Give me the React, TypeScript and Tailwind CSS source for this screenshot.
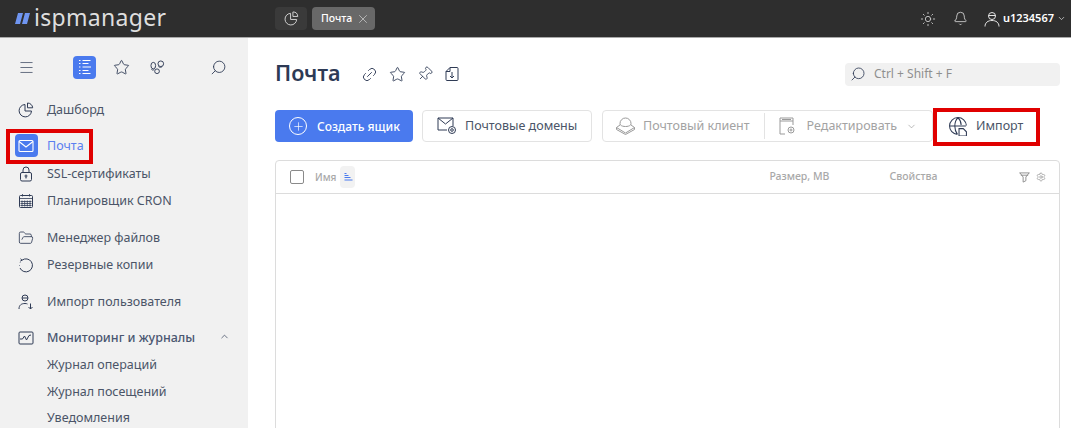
import {
  Bell,
  ChevronDown,
  ChevronUp,
  FolderOpen,
  Link2,
  Menu,
  Pin,
  Plus,
  Search,
  Settings,
  Star,
  Sun,
  X,
} from "lucide-react";
import type { ReactNode } from "react";

const PieIcon = ({ className }: { className?: string }) => (
  <svg viewBox="0 0 16 16" fill="none" stroke="currentColor" strokeWidth="1" className={className}>
    <path d="M7 2.5a6.2 6.2 0 1 0 6.5 6.5H7V2.5Z" />
    <path d="M9.5 1v4.8h5.2A5.2 5.2 0 0 0 9.5 1Z" />
  </svg>
);

const TreeIcon = () => (
  <svg viewBox="0 0 16 16" fill="none" stroke="white" strokeWidth="1" className="size-4">
    <path d="M2 1.5h1.5M2 4.5h1.5M2 8h1.5M2 11.5h1.5M2 14.5h1.5M5.5 1.5h8M5.5 4.5h6M5.5 8h8.5M5.5 11.5h6M5.5 14.5h8" />
  </svg>
);

const CoinsIcon = () => (
  <svg viewBox="0 0 16 16" fill="none" stroke="#2f3b55" strokeWidth="1" className="size-[15px]">
    <ellipse cx="3.5" cy="6" rx="2.5" ry="3.5" />
    <ellipse cx="11.5" cy="4" rx="3" ry="3" />
    <ellipse cx="7.5" cy="12" rx="2.5" ry="2.5" />
    <path d="M1.5 10c1 1 2 1 3 0M9 7c1 1 3 1 4 0" />
  </svg>
);

const LockIcon = () => (
  <svg viewBox="0 0 16 16" fill="none" stroke="#2f3b55" strokeWidth="1" className="size-4">
    <rect x="2.5" y="6.5" width="11" height="8.5" rx="1.5" />
    <path d="M5 6.5V4a3 3 0 0 1 6 0v2.5" />
    <circle cx="8" cy="10" r="1" />
    <path d="M8 11v1.5" />
  </svg>
);

const CalendarIcon = () => (
  <svg viewBox="0 0 16 16" fill="none" stroke="#2f3b55" strokeWidth="1" className="size-4">
    <rect x="1.5" y="2.5" width="13" height="12" rx="1" />
    <path d="M1.5 5.5h13M4.5 1v2.5M11.5 1v2.5M4 7.5v6M6.7 7.5v6M9.3 7.5v6M12 7.5v6M2.5 8.5h11M2.5 10.5h11M2.5 12.5h11" strokeWidth="0.8" />
  </svg>
);

const BackupIcon = () => (
  <svg viewBox="0 0 16 16" fill="none" stroke="#2f3b55" strokeWidth="1" className="size-4">
    <path d="M4 3.2A6.5 6.5 0 1 1 2 11" />
    <path d="M1.5 8.5v.5M2 6l.2-.5" />
    <path d="M2.5 1.8 4 3.2l-1.8 1" />
  </svg>
);

const SidebarItem = ({
  icon,
  label,
  active,
  strong,
  trailing,
}: {
  icon?: ReactNode;
  label: string;
  active?: boolean;
  strong?: boolean;
  trailing?: ReactNode;
}) => (
  <div className="flex h-[27px] items-center">
    <div className="flex w-[47px] shrink-0 items-center justify-center pl-[5px]">{icon}</div>
    <span
      className={
        active
          ? "pt-px text-[12.5px] text-[#5b7ff0]"
          : strong
            ? "pt-px text-[12.5px] font-medium text-[#4a5670]"
            : "pt-px text-[12.5px] text-[#4b5568]"
      }
    >
      {label}
    </span>
    {trailing}
  </div>
);

export default function App() {
  return (
    <div className="flex h-[428px] w-[1071px] flex-col overflow-hidden bg-white font-['Noto_Sans',sans-serif]">
      <header className="flex h-[38px] shrink-0 items-center border-b border-[#a9a9a9] bg-[#2e2e2e] pr-[5px] pl-[15px]">
        <div className="flex w-[260px] items-center gap-[3px]">
          <svg viewBox="0 0 16 11" className="h-[11px] w-[16px]">
            <path d="M3 0h5L5 11H0ZM10 0h5l-3 11H7Z" fill="#6f95f0" />
          </svg>
          <span className="-mt-[2px] text-[23px] leading-none tracking-[0.3px] text-[#dedede]">ispmanager</span>
        </div>
        <div className="flex h-[23px] w-[32px] items-center justify-center rounded bg-[#3a3a3a]">
          <PieIcon className="size-[15px] text-[#d8d8d8]" />
        </div>
        <div className="ml-[5px] flex h-[23px] w-[63px] items-center gap-[4px] rounded bg-[#686868] pl-[9px]">
          <span className="text-[10.5px] font-medium text-white">Почта</span>
          <X className="size-[14px] text-[#d0d0d0]" strokeWidth={1.25} />
        </div>
        <div className="ml-auto flex items-center">
          <Sun className="size-[16px] text-[#d8d8d8]" strokeWidth={1.25} />
          <Bell className="ml-[17px] size-[15px] text-[#e4e4e4]" strokeWidth={1.25} />
          <svg viewBox="0 0 16 16" fill="none" stroke="#e4e4e4" strokeWidth="1" className="ml-[16px] size-[16px]">
            <circle cx="8" cy="5" r="3.5" />
            <path d="M4.5 4.5h7M1 15.5c0-4 3-6 7-6s7 2 7 6" />
          </svg>
          <span className="ml-[3px] text-[11px] font-semibold text-white">u1234567</span>
          <ChevronDown className="ml-[3px] size-[9px] text-[#d8d8d8]" strokeWidth={2} />
        </div>
      </header>

      <div className="flex min-h-0 flex-1">
        <aside className="w-[248px] shrink-0 overflow-hidden bg-[#f1f1f1]">
          <div className="flex h-[48px] items-center pt-[10px] pl-[18px]">
            <Menu className="size-[17px] text-[#2f3b55]" strokeWidth={1} />
            <div className="ml-[38px] flex size-[23px] items-center justify-center rounded-[4px] bg-[#4a7aee]">
              <TreeIcon />
            </div>
            <Star className="ml-[17px] size-[17px] text-[#2f3b55]" strokeWidth={1.25} />
            <div className="ml-[20px]"><CoinsIcon /></div>
            <Search className="ml-[45px] size-[17px] -scale-x-100 text-[#2f3b55]" strokeWidth={1.25} />
          </div>
          <div className="mt-[10px]">
            <SidebarItem icon={<PieIcon className="size-4 text-[#2f3b55]" />} label="Дашборд" />
          </div>
          <div className="mt-[9px] flex flex-col">
            <SidebarItem
              active
              icon={
                <div className="flex size-[23px] shrink-0 items-center justify-center rounded-[4px] bg-[#4a7aee]">
                  <svg viewBox="0 0 16 16" fill="none" stroke="white" strokeWidth="1.1" className="size-4">
                    <rect x="1" y="2.5" width="14" height="11" rx="1" />
                    <path d="m1 3.5 7 5.5 7-5.5" />
                  </svg>
                </div>
              }
              label="Почта"
            />
            <div className="mt-[1px]">
              <SidebarItem icon={<LockIcon />} label="SSL-сертификаты" />
            </div>
            <SidebarItem icon={<CalendarIcon />} label="Планировщик CRON" />
          </div>
          <div className="mt-[10px]">
            <SidebarItem icon={<FolderOpen className="size-4 text-[#2f3b55]" strokeWidth={1.25} />} label="Менеджер файлов" />
            <SidebarItem icon={<BackupIcon />} label="Резервные копии" />
          </div>
          <div className="mt-[10px]">
            <SidebarItem
              icon={
                <svg viewBox="0 0 16 16" fill="none" stroke="#2f3b55" strokeWidth="1" className="size-4">
                  <circle cx="7" cy="4" r="3" />
                  <path d="M4 4h6M1 15c0-4 2.5-5.5 6-5.5 1 0 2 .2 2.5.5M12.5 9.5V15M10.5 13l2 2 2-2" />
                </svg>
              }
              label="Импорт пользователя"
            />
          </div>
          <div className="mt-[9px]">
            <SidebarItem
              strong
              icon={
                <svg viewBox="0 0 16 16" fill="none" stroke="#2f3b55" strokeWidth="1" className="size-4">
                  <rect x="1" y="2" width="14" height="12" rx="1" />
                  <path d="M2 9h2.5l2-3 2 4 2.5-4.5L13 5" />
                </svg>
              }
              label="Мониторинг и журналы"
              trailing={<ChevronUp className="ml-[24px] -mt-[3px] size-[11px] text-[#2f3b55]" strokeWidth={1.5} />}
            />
            <SidebarItem label="Журнал операций" />
            <SidebarItem label="Журнал посещений" />
            <div className="-mt-px">
              <SidebarItem label="Уведомления" />
            </div>
          </div>
        </aside>

        <main className="min-w-0 flex-1 pr-[11px] pl-[27px]">
          <div className="flex h-[72px] items-center">
            <h1 className="-mt-[2px] text-[21.5px] leading-none font-semibold text-[#2d3a55]">Почта</h1>
            <Link2 className="ml-[21px] size-[17px] -rotate-45 text-[#2f3b55]" strokeWidth={1.25} />
            <Star className="ml-[11px] size-[17px] text-[#2f3b55]" strokeWidth={1.25} />
            <Pin className="ml-[11px] size-[16px] rotate-45 text-[#2f3b55]" strokeWidth={1.25} />
            <svg viewBox="0 0 16 16" fill="none" stroke="#2f3b55" strokeWidth="1" className="ml-[11px] size-[16px]">
              <path d="M6 1.5h7a1 1 0 0 1 1 1v11a1 1 0 0 1-1 1H3a1 1 0 0 1-1-1V5.5ZM6 1.5v4H2M8 6v6M6 10l2 2 2-2" />
            </svg>
            <div className="ml-auto flex h-[23px] w-[215px] items-center rounded bg-[#f1f1f1] pl-[5px]">
              <Search className="size-[16px] -scale-x-100 text-[#2f3b55]" strokeWidth={1.25} />
              <span className="ml-[8px] text-[12px] text-[#8f8f8f]">Ctrl + Shift + F</span>
            </div>
          </div>

          <div className="flex h-[32px] items-center">
            <button className="flex h-[32px] w-[138px] items-center rounded bg-[#4a7aee] pl-[14px]">
              <span className="flex size-[18px] items-center justify-center rounded-full border border-white">
                <Plus className="size-[13px] text-white" strokeWidth={1.25} />
              </span>
              <span className="ml-[10px] pt-px text-[12px] font-medium text-white">Создать ящик</span>
            </button>
            <button className="ml-[9px] flex h-[32px] w-[170px] items-center rounded border border-[#e3e3e3] pl-[14px]">
              <svg viewBox="0 0 20 18" fill="none" stroke="#2f3b55" strokeWidth="1" className="h-[18px] w-[20px]">
                <path d="M10 13H1V1h15v8M1 1l7.5 6L16 1" />
                <circle cx="15" cy="13" r="3.5" />
                <circle cx="15" cy="13" r="1.3" />
              </svg>
              <span className="ml-[8px] pt-px text-[12.5px] text-[#4b5568]">Почтовые домены</span>
            </button>
            <div className="ml-[10px] flex h-[32px] w-[331px] items-center rounded border border-[#e3e3e3] pl-[12px]">
              <svg viewBox="0 0 20 18" fill="none" stroke="#9a9a9a" strokeWidth="1" className="h-[18px] w-[21px]">
                <circle cx="10" cy="6.5" r="5.5" />
                <path d="M4.5 8 1 10.500l9 5.500 9-5.500L15.500 8M1 10.500v2l9 5 9-5v-2" fill="white" />
                <path d="M5 8c2 2 8 2 10 0" />
              </svg>
              <span className="ml-[7px] pt-px text-[12.5px] text-[#a3a3a3]">Почтовый клиент</span>
              <div className="ml-[14px] h-[26px] w-px bg-[#e3e3e3]" />
              <svg viewBox="0 0 18 18" fill="none" stroke="#9a9a9a" strokeWidth="1" className="ml-[14px] h-[20px] w-[18px]">
                <path d="M1 15V1h13v7M1 4h13M3 2.500h9M1 15v2h5" />
                <circle cx="12" cy="13" r="3" />
                <circle cx="12" cy="13" r="1" />
              </svg>
              <span className="ml-[10px] pt-px text-[12.5px] text-[#a3a3a3]">Редактировать</span>
              <ChevronDown className="ml-[9px] size-[11px] text-[#8a8a8a]" strokeWidth={1.25} />
            </div>
            <button className="ml-[2px] flex h-[32px] flex-1 items-center pl-[14px]">
              <svg viewBox="0 0 18 18" fill="none" stroke="#2f3b55" strokeWidth="1" className="size-[19px]">
                <path d="M8 16.500a8 8 0 1 1 8.500-8.500M1 8.500h15M8.500 .5c-2 2-3 5-3 8s1 6 2.500 8M8.500.5c2 2 3 4 3 7" />
                <path d="M9.500 11h4l3 3v4h-7Z" fill="white" />
              </svg>
              <span className="ml-[8px] pt-px text-[12.5px] text-[#4b5568]">Импорт</span>
            </button>
          </div>

          <div className="mt-[18px] h-[300px] rounded-t border border-[#dcdcdc]">
            <div className="flex h-[33px] items-center border-b border-[#dcdcdc] pl-[14px]">
              <div className="size-[14px] rounded-[2px] border border-[#8a8a8a]" />
              <span className="ml-[11px] text-[10px] font-medium text-[#a9a9a9]">Имя</span>
              <div className="ml-[4px] flex h-[22px] w-[15px] items-center justify-center rounded bg-[#f2f2f2]">
                <svg viewBox="0 0 10 10" fill="none" stroke="#4a7aee" strokeWidth="1.2" className="size-[10px]">
                  <path d="M1.500 1.500h2M1.500 3.500h4M1.500 5.500h6M1.500 8h8" />
                </svg>
              </div>
              <span className="ml-[414px] text-[10.5px] font-medium text-[#a9a9a9]">Размер, МВ</span>
              <span className="ml-[60px] text-[10.5px] font-medium text-[#a9a9a9]">Свойства</span>
              <div className="ml-auto flex items-center gap-[6px] pr-[13px]">
                <svg viewBox="0 0 12 12" fill="none" stroke="#8a8a8a" strokeWidth="1" className="size-[11px]">
                  <path d="M.5 1h11M2 3.500h8M4.500 5.500 4.500 11l3-1.500v-4L11 1M4.500 5.500 1 1" />
                </svg>
                <Settings className="size-[10px] text-[#8a8a8a]" strokeWidth={1.5} />
              </div>
            </div>
          </div>
        </main>
      </div>

      {/* red callouts */}
      <div className="absolute top-[129px] left-[6px] h-[35px] w-[87px] border-[4px] border-[#e00000]" />
      <div className="absolute top-[108px] left-[933px] h-[38px] w-[107px] border-[4px] border-[#e00000]" />
    </div>
  );
}
